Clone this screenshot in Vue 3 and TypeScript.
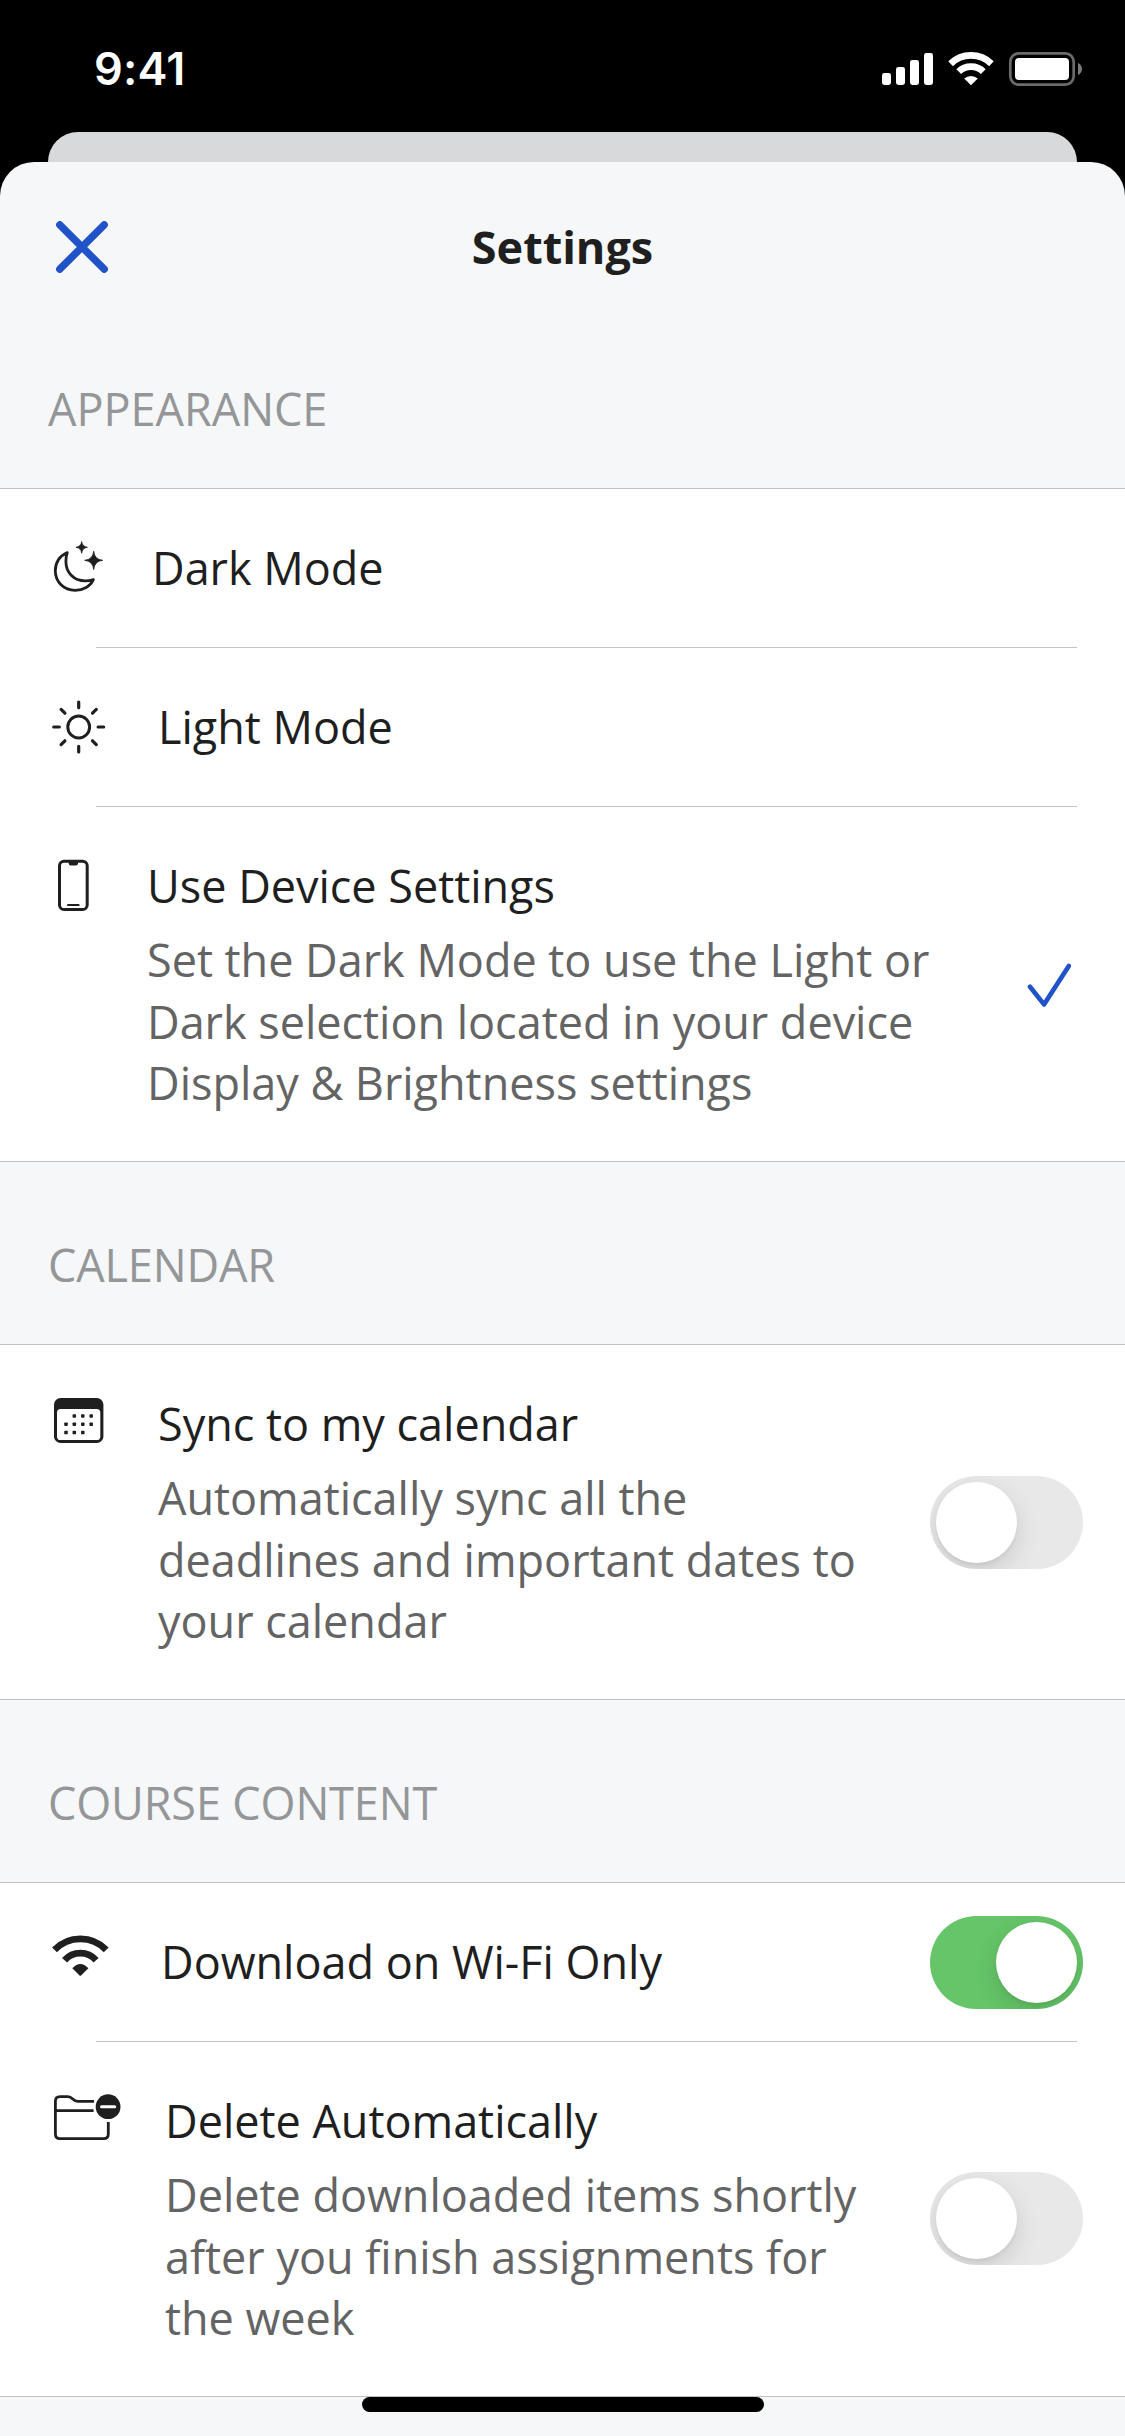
<script setup lang="ts">
import { reactive } from 'vue'

type IconName = 'moon' | 'sun' | 'phone' | 'calendar' | 'wifi' | 'folder'

interface Row {
  icon: IconName
  iconWidth: number
  title: string
  lines?: string[]
  selected?: boolean
  on?: boolean
}

interface Section {
  heading: string
  rows: Row[]
}

const sections = reactive<Section[]>([
  {
    heading: 'APPEARANCE',
    rows: [
      { icon: 'moon', iconWidth: 56, title: 'Dark Mode' },
      { icon: 'sun', iconWidth: 62, title: 'Light Mode' },
      {
        icon: 'phone',
        iconWidth: 51,
        title: 'Use Device Settings',
        lines: [
          'Set the Dark Mode to use the Light or',
          'Dark selection located in your device',
          'Display & Brightness settings',
        ],
        selected: true,
      },
    ],
  },
  {
    heading: 'CALENDAR',
    rows: [
      {
        icon: 'calendar',
        iconWidth: 62,
        title: 'Sync to my calendar',
        lines: ['Automatically sync all the', 'deadlines and important dates to', 'your calendar'],
        on: false,
      },
    ],
  },
  {
    heading: 'COURSE CONTENT',
    rows: [
      { icon: 'wifi', iconWidth: 65, title: 'Download on Wi-Fi Only', on: true },
      {
        icon: 'folder',
        iconWidth: 69,
        title: 'Delete Automatically',
        lines: ['Delete downloaded items shortly', 'after you finish assignments for', 'the week'],
        on: false,
      },
    ],
  },
])

const calendarDots: [number, number][] = [
  [26.3, 23], [34.8, 23], [43.2, 23],
  [18, 31.3], [26.3, 31.3], [34.8, 31.3], [43.2, 31.3],
  [18, 39.6], [26.3, 39.6], [34.8, 39.6],
]
</script>

<template>
  <div class="screen">
    <div class="status">
      <span class="time">9:41</span>
      <svg class="signals" width="202" height="36" viewBox="0 0 202 36" fill="#fff">
        <rect x="1" y="22" width="9" height="12" rx="2.4" />
        <rect x="15" y="16" width="9" height="18" rx="2.4" />
        <rect x="29" y="9" width="9" height="25" rx="2.4" />
        <rect x="43" y="2" width="9" height="32" rx="2.4" />
        <g fill="none" stroke="#fff" stroke-width="6.8">
          <path d="M69.6 12.7A29.3 29.3 0 0 1 110.4 12.7" />
          <path d="M77.7 20.6A17.6 17.6 0 0 1 102.3 20.6" />
        </g>
        <path d="M83.2 27.6A10.2 10.2 0 0 1 96.8 27.6L90 34.3Z" />
        <rect x="129.3" y="2.3" width="63.4" height="31.4" rx="8.6" fill="none" stroke="#6b6b6b" stroke-width="2.7" />
        <rect x="134" y="7" width="54" height="22" rx="4" />
        <path d="M197 12C202.3 14.2 202.3 21.8 197 24Z" fill="#7c7c7c" />
      </svg>
    </div>
    <div class="back-sheet"></div>
    <main class="sheet">
      <header class="nav">
        <button class="close" aria-label="Close">
          <svg width="52" height="52" viewBox="0 0 52 52" fill="none" stroke="#2153c8" stroke-width="7.4" stroke-linecap="round">
            <path d="M3.8 3.8L48.2 48.2M48.2 3.8L3.8 48.2" />
          </svg>
        </button>
        <h1>Settings</h1>
      </header>
      <section v-for="section in sections" :key="section.heading">
        <h2>{{ section.heading }}</h2>
        <div class="group">
          <div v-for="row in section.rows" :key="row.title" class="row">
            <svg class="icon" :width="row.iconWidth" height="62" fill="none" stroke="#1f1f1f">
              <template v-if="row.icon === 'moon'">
                <path
                  d="M19.3 15.6C11.6 18.6 7.3 25.8 7.3 33.8C7.3 45 16 53.3 27 53.3C35.3 53.3 42.3 49.3 45.4 42.6C42.8 43.5 40 43.9 37.2 43.9C25.6 43.9 17.9 35.4 17.9 24.6C17.9 21.4 18.3 18.4 19.3 15.6Z"
                  stroke-width="2.8" stroke-linejoin="round"
                />
                <path
                  d="M33.7 4.6Q34.3 9.7 39.4 10.3Q34.3 10.9 33.7 16.2Q33.1 10.9 27.9 10.3Q33.1 9.7 33.7 4.6ZM45.7 14.2Q46.5 22.5 54.7 23.3Q46.5 24.1 45.7 32.6Q44.9 24.1 36.6 23.3Q44.9 22.5 45.7 14.2Z"
                  fill="#1f1f1f" stroke-width="0.8" stroke-linejoin="round"
                />
              </template>
              <g v-else-if="row.icon === 'sun'" stroke-width="3.2" stroke-linecap="round">
                <circle cx="30.7" cy="31" r="10.9" stroke-width="3" />
                <path d="M30.7 6.1V11.7M30.7 50.3V55.9M5.7 31H11.3M50.1 31H55.7M13.1 13.4L16.9 17.2M44.5 44.8L48.3 48.6M13.1 48.6L16.9 44.8M44.5 17.2L48.3 13.4" />
              </g>
              <template v-else-if="row.icon === 'phone'">
                <rect x="11.5" y="6.2" width="27.7" height="48.4" rx="4.6" stroke-width="3" />
                <path d="M20.7 7H30V8.6Q30 10.4 28.2 10.4H22.5Q20.7 10.4 20.7 8.6Z" fill="#1f1f1f" stroke="none" />
                <path d="M20 50H30.6" stroke-width="2" stroke-linecap="round" />
              </template>
              <template v-else-if="row.icon === 'calendar'">
                <rect x="6" y="5" width="49.4" height="45" rx="6.6" fill="#1f1f1f" stroke="none" />
                <rect x="9" y="16" width="43.3" height="31" rx="3.6" fill="#fff" stroke="none" />
                <rect
                  v-for="[x, y] in calendarDots" :key="`${x}-${y}`"
                  :x="x - 1.75" :y="y - 1.75" width="3.5" height="3.5" rx="0.7" fill="#1f1f1f" stroke="none"
                />
              </template>
              <template v-else-if="row.icon === 'wifi'">
                <path d="M6.5 18.8A36 36 0 0 1 58.2 18.8M16.6 29.2A21 21 0 0 1 48.1 29.2" stroke-width="6.8" />
                <path d="M24.3 37.2Q32.3 28.6 40.4 37.2L33.3 44.3Q32.3 45.3 31.3 44.3Z" fill="#1f1f1f" stroke="none" />
              </template>
              <template v-else>
                <path
                  d="M46 11.3H30C24.5 11.3 25 6.7 20 6.7H12Q7.4 6.7 7.4 11.3V44Q7.4 48.6 12 48.6H55.7Q60.3 48.6 60.3 44V32M7.4 20.6H45.6"
                  stroke-width="2.8"
                />
                <circle cx="60.1" cy="16.7" r="12.4" fill="#1f1f1f" stroke="none" />
                <path d="M53.5 16.7H66.7" stroke="#fff" stroke-width="3" stroke-linecap="round" />
              </template>
            </svg>
            <div class="copy">
              <div class="title">{{ row.title }}</div>
              <p v-if="row.lines">
                <span v-for="line in row.lines" :key="line">{{ line }}</span>
              </p>
            </div>
            <svg
              v-if="row.selected" class="check" width="44" height="44" viewBox="0 0 44 44"
              fill="none" stroke="#2153c8" stroke-width="4.7" stroke-linecap="round" stroke-linejoin="round"
            >
              <path d="M3 23.8L17 41.4L41.8 3" />
            </svg>
            <button
              v-if="row.on !== undefined" class="toggle" :class="{ on: row.on }"
              role="switch" :aria-checked="row.on" @click="row.on = !row.on"
            >
              <span class="thumb"></span>
            </button>
          </div>
        </div>
      </section>
    </main>
    <div class="home"></div>
  </div>
</template>

<style>
body {
  margin: 0;
  background: #000;
}
</style>

<style scoped>
.screen {
  position: relative;
  display: flex;
  flex-direction: column;
  width: 1125px;
  height: 2436px;
  overflow: hidden;
  background: #000;
  color: #1f1f1f;
  font: 400 45px/61.3px 'Open Sans', sans-serif;
  letter-spacing: -0.02px;
}
.status {
  display: flex;
  justify-content: space-between;
  align-items: flex-start;
  box-sizing: border-box;
  height: 132px;
  padding: 51px 42px 0 94px;
}
.time {
  font: 600 45px/36px Inter, sans-serif;
  letter-spacing: 0.2px;
  color: #fff;
}
.back-sheet {
  height: 30px;
  margin: 0 48px;
  border-radius: 30px 30px 0 0;
  background: #d8d9da;
}
.sheet {
  flex: 1;
  border-radius: 34px 34px 0 0;
  background: #f5f7f9;
}
.nav {
  display: grid;
  grid-template-columns: 52px 1fr 52px;
  align-items: center;
  height: 170px;
  padding: 0 56px;
}
button {
  padding: 0;
  border: 0;
  background: none;
}
.close,
.close svg {
  display: block;
  width: 52px;
  height: 52px;
}
h1 {
  margin: 0;
  font-size: 45px;
  font-weight: 700;
  text-align: center;
}
h2 {
  box-sizing: border-box;
  height: 182px;
  margin: 0;
  padding: 72px 48px 0;
  font-size: 45px;
  font-weight: 400;
  letter-spacing: -0.14px;
  color: #949698;
}
section:first-of-type h2 {
  height: 156px;
  padding-top: 46px;
  letter-spacing: -0.02px;
}
.group {
  border-top: 1px solid #bfc1c3;
  border-bottom: 1px solid #bfc1c3;
  background: #fff;
}
.row {
  display: flex;
  align-items: center;
  box-sizing: border-box;
  min-height: 158px;
  padding: 48px 42px 48px 48px;
}
.row:has(p) {
  height: 354px;
}
.row + .row::before {
  content: '';
  align-self: flex-start;
  width: 981px;
  height: 1px;
  margin: -49px -1029px 0 48px;
  background: #c2c3c5;
}
.row + .row {
  margin-top: 1px;
}
.icon {
  flex: none;
  align-self: flex-start;
  overflow: visible;
  margin-right: 48px;
}
.copy {
  flex: 1;
  align-self: flex-start;
  white-space: nowrap;
}
p {
  margin: 13px 0 0;
  color: #646464;
}
p span {
  display: block;
}
.check {
  margin: 2px 12px 0 0;
}
.toggle {
  display: flex;
  flex: none;
  box-sizing: border-box;
  width: 153px;
  height: 93px;
  margin: -20px 0;
  padding: 6px;
  border-radius: 47px;
  overflow: hidden;
  background: #e8e8e8;
}
.row + .row .toggle {
  margin-top: -21px;
}
.toggle.on {
  justify-content: flex-end;
  background: #65c568;
}
.thumb {
  width: 81px;
  height: 81px;
  border-radius: 50%;
  background: #fff;
  box-shadow: 0 9px 24px rgba(0, 0, 0, 0.13), 0 3px 3px rgba(0, 0, 0, 0.04);
}
.home {
  position: absolute;
  left: 362px;
  top: 2397px;
  width: 402px;
  height: 15px;
  border-radius: 8px;
  background: #000;
}
</style>
